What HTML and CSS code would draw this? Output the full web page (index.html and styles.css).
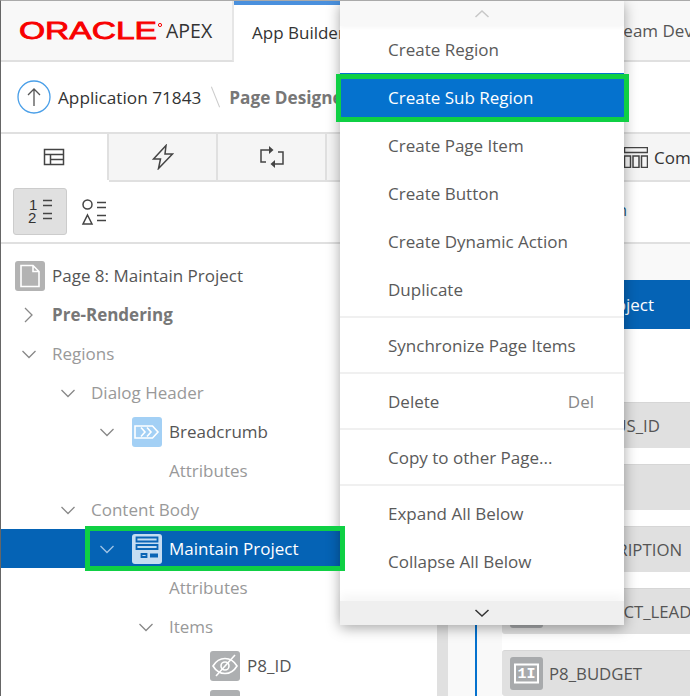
FILE: index.html
```html
<!DOCTYPE html>
<html lang="en">
<head>
<meta charset="utf-8">
<title>Oracle APEX Page Designer</title>
<link rel="stylesheet" href="styles.css">
</head>
<body>
<div class="app">
  <header class="topbar">
    <div class="brand">
      <svg class="oracle" width="146" height="22" viewBox="0 0 146 22"><text x="0" y="19" textLength="138" lengthAdjust="spacingAndGlyphs" class="oracle-word">ORACLE</text><circle cx="141" cy="5" r="1.6" class="oracle-reg"/></svg>
      <span class="apex">APEX</span>
    </div>
    <div class="toptab active-top">App Builder</div>
    <div class="toptab sql">SQL Workshop</div>
    <div class="toptab team">Team Development</div>
  </header>

  <div class="crumbs">
    <svg class="up" width="34" height="34" viewBox="0 0 34 34"><circle cx="17" cy="17" r="16" class="up-ring"/><path d="M17 26V9M11 15l6-6 6 6" class="up-arrow"/></svg>
    <span class="crumb">Application 71843</span>
    <span class="slash"></span>
    <span class="crumb-current">Page Designer</span>
  </div>

  <div class="panes">
    <section class="left">
      <div class="tabs">
        <div class="tab current">
          <svg width="22" height="20" viewBox="0 0 22 20"><path d="M1.500 2.500h19v15h-19zM1.500 7.500h19M7.500 7.500v10M7.500 12.500h13" class="ic"/></svg>
        </div>
        <div class="tab">
          <svg width="22" height="26" viewBox="0 0 22 26"><path d="M14 1.500 1.500 15h7L6.500 24.500 20.500 10h-7.500z" class="ic"/></svg>
        </div>
        <div class="tab">
          <svg width="26" height="26" viewBox="0 0 26 26"><path d="M10 6H2v12h5M16 20h8V8h-5" class="ic"/><path d="M10 2l4.500 4-4.500 4zM16 16l-4.500 4 4.500 4z" class="ic-fill"/></svg>
        </div>
        <div class="tab"></div>
      </div>
      <div class="tools">
        <div class="toolbtn pressed">
          <svg width="26" height="26" viewBox="0 0 26 26"><text x="2" y="11" class="num">1</text><text x="1" y="24" class="num">2</text><path d="M16 1.500h9M16 6.500h9M16 14.500h9M16 19.500h9" class="ic"/></svg>
        </div>
        <div class="toolbtn">
          <svg width="26" height="26" viewBox="0 0 26 26"><circle cx="6.500" cy="5.500" r="4.500" class="ic"/><path d="M6.500 16 11 25H2zM16 3.500h9M16 8.500h9M16 16.500h9M16 21.500h9" class="ic"/></svg>
        </div>
      </div>
      <div class="tree">
        <div class="row lv0 dark">
          <span class="badge grey"><svg width="30" height="30" viewBox="0 0 30 30"><path d="M6 4.500h12l6 6v15H6zM18 4.500v6h6" class="ic-white"/></svg></span>
          <span>Page 8: Maintain Project</span>
        </div>
        <div class="row lv0 strong">
          <span class="chev"><svg width="16" height="16" viewBox="0 0 16 16"><path d="M4 1l7 7-7 7" class="chev-line"/></svg></span>
          <span>Pre-Rendering</span>
        </div>
        <div class="row lv0 muted">
          <span class="chev"><svg width="16" height="16" viewBox="0 0 16 16"><path d="M1.500 5l6.500 6.500L14.500 5" class="chev-line"/></svg></span>
          <span>Regions</span>
        </div>
        <div class="row lv1 muted">
          <span class="chev"><svg width="16" height="16" viewBox="0 0 16 16"><path d="M1.500 5l6.500 6.500L14.500 5" class="chev-line"/></svg></span>
          <span>Dialog Header</span>
        </div>
        <div class="row lv2 dark">
          <span class="chev"><svg width="16" height="16" viewBox="0 0 16 16"><path d="M1.500 5l6.500 6.500L14.500 5" class="chev-line"/></svg></span>
          <span class="badge blue"><svg width="30" height="30" viewBox="0 0 30 30"><path d="M3 9h17.500l5.500 6-5.500 6H3z" class="ic-white"/><path d="M9 10.500l4 4.500-4 4.500M15 10.500l4 4.500-4 4.500" class="ic-white"/></svg></span>
          <span>Breadcrumb</span>
        </div>
        <div class="row lv3 muted"><span class="chev"></span><span>Attributes</span></div>
        <div class="row lv1 muted">
          <span class="chev"><svg width="16" height="16" viewBox="0 0 16 16"><path d="M1.500 5l6.500 6.500L14.500 5" class="chev-line"/></svg></span>
          <span>Content Body</span>
        </div>
        <div class="row lv2 selected">
          <span class="chev"><svg width="16" height="16" viewBox="0 0 16 16"><path d="M1.500 5l6.500 6.500L14.500 5" class="chev-line"/></svg></span>
          <span class="badge pale"><svg width="30" height="30" viewBox="0 0 30 30"><path d="M4.500 3.500h21v4h-21zM4.500 11h21v4h-21zM9.500 20h5v3h-5z" class="ic-blue"/><path d="M18 19.500h8v4h-8z" class="ic-blue-fill"/></svg></span>
          <span class="sel-label">Maintain Project</span>
        </div>
        <div class="row lv3 muted"><span class="chev"></span><span>Attributes</span></div>
        <div class="row lv3 muted">
          <span class="chev"><svg width="16" height="16" viewBox="0 0 16 16"><path d="M1.500 5l6.500 6.500L14.500 5" class="chev-line"/></svg></span>
          <span>Items</span>
        </div>
        <div class="row lv4 dark">
          <span class="chev"></span>
          <span class="badge steel"><svg width="30" height="30" viewBox="0 0 30 30"><path d="M3 15c3-5 7-7.500 12-7.500S24 10 27 15c-3 5-7 7.500-12 7.500S6 20 3 15z" class="ic-white"/><circle cx="15" cy="15" r="4" class="ic-white"/><path d="M6 25 25 4" class="ic-white"/></svg></span>
          <span>P8_ID</span>
        </div>
        <div class="row lv4 dark">
          <span class="chev"></span>
          <span class="badge steel"></span>
          <span>P8_NAME</span>
        </div>
      </div>
    </section>

    <section class="right">
      <div class="tabs">
        <div class="tab spacer"></div>
        <div class="tab comp">
          <svg width="24" height="21" viewBox="0 0 24 21"><path d="M.5.500h23v5H.5zM.5 9h6v11.500h-6zM9 9h6v11.500H9zM17.500 9h6v11.500h-6z" class="ic"/></svg>
          <span>Component View</span>
        </div>
      </div>
      <div class="subtools"><span class="sublink">Region</span></div>
      <div class="layout">
        <div class="layout-head"><span>Maintain Project</span></div>
        <div class="slots">
          <div class="slot"><span class="slot-icon"></span><span>P8_STATUS_ID</span></div>
          <div class="slot"><span class="slot-icon"></span><span>P8_NAME</span></div>
          <div class="slot"><span class="slot-icon"></span><span>P8_DESCRIPTION</span></div>
          <div class="slot"><span class="slot-icon"></span><span>P8_PROJECT_LEAD</span></div>
          <div class="slot"><span class="slot-icon"><svg width="33" height="33" viewBox="0 0 33 33"><path d="M5 7.500h23v18H5z" class="ic-white thick"/><text x="16.500" y="21" class="num-field">1I</text></svg></span><span>P8_BUDGET</span></div>
        </div>
      </div>
    </section>
  </div>

  <nav class="menu">
    <div class="scroll-up"><svg width="16" height="10" viewBox="0 0 16 10"><path d="M1.500 8 8 2l6.500 6" class="chev-faint"/></svg></div>
    <div class="menu-item">Create Region</div>
    <div class="menu-item focused">Create Sub Region</div>
    <div class="menu-item">Create Page Item</div>
    <div class="menu-item">Create Button</div>
    <div class="menu-item">Create Dynamic Action</div>
    <div class="menu-item">Duplicate</div>
    <div class="menu-sep"></div>
    <div class="menu-item">Synchronize Page Items</div>
    <div class="menu-sep"></div>
    <div class="menu-item"><span>Delete</span><span class="accel">Del</span></div>
    <div class="menu-sep"></div>
    <div class="menu-item">Copy to other Page...</div>
    <div class="menu-sep"></div>
    <div class="menu-item">Expand All Below</div>
    <div class="menu-item">Collapse All Below</div>
    <div class="scroll-down"><svg width="16" height="10" viewBox="0 0 16 10"><path d="M1.500 2 8 8l6.500-6" class="chev-dark"/></svg></div>
  </nav>
</div>
</body>
</html>
```
FILE: styles.css
```css
* { box-sizing: border-box; }
html, body { margin: 0; padding: 0; background: #fff; }
body { font-family: "Open Sans", "Noto Sans", sans-serif; font-size: 16px; color: #555; }
svg { display: block; flex: none; }

.app {
  position: relative;
  width: 690px;
  height: 696px;
  overflow: hidden;
  background: #fff;
  border-left: 1px solid #666;
  border-top: 1px solid #aaa;
  display: flex;
  flex-direction: column;
}

/* icon strokes */
.ic { fill: none; stroke: #444; stroke-width: 1.5; }
.ic-fill { fill: #444; }
.ic-white { fill: none; stroke: #fff; stroke-width: 1.6; }
.ic-white.thick { stroke-width: 2; }
.ic-blue { fill: none; stroke: #0a65b5; stroke-width: 1.8; }
.ic-blue-fill { fill: #0a65b5; }
.chev-line { fill: none; stroke: currentColor; stroke-width: 1.3; }
.chev-faint { fill: none; stroke: #c8c8c8; stroke-width: 1.5; }
.chev-dark { fill: none; stroke: #333; stroke-width: 1.5; }
.num { font: 15px "Liberation Sans", sans-serif; fill: #333; }
.num-field { font: bold 15px "Liberation Mono", monospace; fill: #fff; text-anchor: middle; }

/* top bar */
.topbar { display: flex; height: 61px; flex: none; }
.brand {
  width: 233px;
  flex: none;
  display: flex;
  align-items: center;
  padding-left: 18px;
  gap: 1px;
  background: #f8f8f8;
  border-right: 2px solid #e6e6e6;
  border-bottom: 2px solid #e0e0e0;
}
.oracle-word { font: 400 23px "Liberation Sans", sans-serif; fill: #f80000; stroke: #f80000; stroke-width: .8; }
.oracle-reg { fill: none; stroke: #f80000; stroke-width: 1; }
.apex { font-size: 19.500px; color: #333; }
.toptab {
  display: flex;
  flex: none;
  align-items: center;
  font-size: 17px;
  background: #f8f8f8;
  border-bottom: 2px solid #e0e0e0;
  white-space: nowrap;
  color: #333;
}
.active-top {
  width: 132px;
  padding-left: 18px;
  background: #fff;
  border-top: 4px solid #4a90dd;
  border-bottom: 2px solid #fff;
}
.sql { width: 245px; padding-left: 20px; }
.team { width: 200px; padding-left: 3px; color: #555; }

/* breadcrumb */
.crumbs {
  display: flex;
  align-items: center;
  height: 72px;
  flex: none;
  padding-left: 16px;
  border-bottom: 2px solid #e0e0e0;
  white-space: nowrap;
  font-size: 17.200px;
}
.up { margin-right: 7px; }
.up-ring { fill: none; stroke: #4a9fe8; stroke-width: 1.3; }
.up-arrow { fill: none; stroke: #555; stroke-width: 1.3; }
.crumb { color: #333; }
.slash {
  width: 1px;
  height: 22px;
  margin: 0 13px 0 14px;
  background: #ccc;
  transform: rotate(-22deg);
}
.crumb-current { font-weight: 700; color: #777; }

/* panes */
.panes { display: flex; flex: 1; min-height: 0; }
.left { width: 436px; flex: none; display: flex; flex-direction: column; }
.right {
  flex: 1;
  min-width: 0;
  display: flex;
  flex-direction: column;
  border-left: 11px solid #e0e0e0;
  overflow: hidden;
}

.tabs {
  display: flex;
  height: 48px;
  flex: none;
  border-bottom: 2px solid #e0e0e0;
  background: #f5f5f5;
}
.tab {
  width: 109px;
  flex: none;
  display: flex;
  align-items: center;
  justify-content: center;
  border-right: 2px solid #e0e0e0;
}
.tab.current { width: 108px; background: #fff; box-shadow: 0 2px 0 #fff; }
.tab.spacer { width: 176px; }
.comp {
  width: auto;
  flex: 1;
  justify-content: flex-start;
  gap: 6px;
  border-right: 0;
  color: #333;
  white-space: nowrap;
  font-size: 17px;
}

.tools {
  display: flex;
  align-items: center;
  height: 62px;
  flex: none;
  gap: 14px;
  padding-left: 12px;
  border-bottom: 2px solid #e0e0e0;
}
.toolbtn {
  width: 54px;
  height: 47px;
  display: flex;
  align-items: center;
  justify-content: center;
}
.toolbtn + .toolbtn { width: 26px; }
.pressed { background: #e0e0e0; border: 1px solid #ccc; border-radius: 3px; margin-bottom: 1px; }

/* tree */
.tree { padding-top: 12px; font-size: 17px; white-space: nowrap; }
.row { display: flex; align-items: center; height: 39px; }
.lv0 { padding-left: 12px; }
.lv1 { padding-left: 51px; }
.lv2 { padding-left: 90px; }
.lv3 { padding-left: 129px; }
.lv4 { padding-left: 168px; }
.dark { color: #555; }
.muted { color: #999; }
.strong { color: #777; font-weight: 700; }
.chev { width: 39px; padding-left: 8px; flex: none; color: #888; }
.badge {
  width: 30px;
  height: 30px;
  flex: none;
  margin: 0 7px 0 2px;
  border-radius: 3px;
}
.grey { background: #b3b3b3; }
.blue { background: #a3d0f5; }
.pale { background: #c5ddf2; }
.steel { background: #adafb1; }
.selected { position: relative; background: #0563b5; color: #fff; }
.selected .chev { color: #a0c4e6; }
.selected::after {
  content: "";
  position: absolute;
  z-index: 2;
  left: 84px;
  right: 92px;
  top: -3px;
  bottom: -3px;
  border: 5px solid #0fd044;
}

/* right pane */
.subtools {
  display: flex;
  justify-content: flex-end;
  align-items: center;
  height: 62px;
  flex: none;
  padding-right: 63px;
  border-bottom: 2px solid #e0e0e0;
}
.sublink { color: #1f5d80; font-size: 16px; padding-bottom: 4px; }
.layout { flex: 1; background: #f9f9f9; position: relative; }
.layout-head {
  margin-top: 36px;
  height: 49px;
  background: #0563b5;
  color: #fff;
  display: flex;
  align-items: center;
  justify-content: flex-end;
  padding-right: 36px;
  font-size: 17px;
  white-space: nowrap;
}
.slots {
  margin: 0 0 0 27px;
  padding: 73px 0 0 25px;
  border-left: 2px solid #0572ce;
  display: flex;
  flex-direction: column;
  gap: 16px;
  background: linear-gradient(to right, #f9f9f9 25px, #fff 25px);
}
.slot {
  height: 46px;
  flex: none;
  display: flex;
  align-items: center;
  gap: 6px;
  padding-left: 8px;
  background: #e0e0e0;
  border-top: 1px solid #d6d6d6;
  border-radius: 3px 0 0 3px;
  white-space: nowrap;
  font-size: 16.800px;
  color: #555;
}
.slot-icon { width: 33px; height: 33px; flex: none; background: #a8aaac; border-radius: 3px; }

/* context menu */
.menu {
  position: absolute;
  z-index: 1;
  left: 339px;
  top: 0;
  width: 284px;
  height: 624px;
  display: flex;
  flex-direction: column;
  background: #fff;
  border-radius: 3px;
  box-shadow: 0 3px 14px rgba(0, 0, 0, .35);
  font-size: 17px;
}
.scroll-up {
  height: 25px;
  flex: none;
  display: flex;
  align-items: center;
  justify-content: center;
  background: #f8f8f8;
  box-shadow: 0 2px 4px rgba(0, 0, 0, .03);
}
.scroll-down {
  height: 24px;
  flex: none;
  margin-top: auto;
  display: flex;
  align-items: center;
  justify-content: center;
  background: #efefef;
  box-shadow: 0 -6px 10px rgba(0, 0, 0, .04);
}
.menu-item {
  height: 48px;
  flex: none;
  display: flex;
  align-items: center;
  justify-content: space-between;
  padding: 0 30px 2px 48px;
  color: #5a5a5a;
  white-space: nowrap;
}
.accel { color: #888; }
.menu-sep { height: 2px; flex: none; margin: 2px 0 4px; background: #f0f0f0; }
.focused { position: relative; background: #0572ce; color: #fff; box-shadow: 0 -1px 0 #0572ce; }
.focused::after {
  content: "";
  position: absolute;
  left: -4px;
  right: -5px;
  top: 0;
  bottom: 0;
  border: 5px solid #0fd044;
}
```
